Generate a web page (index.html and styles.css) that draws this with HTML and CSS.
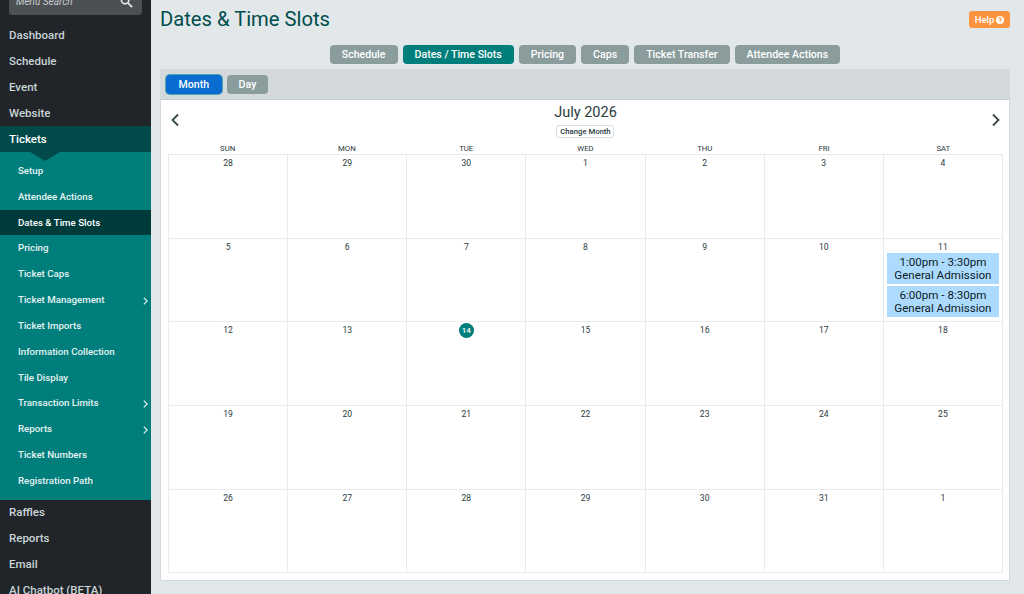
FILE: index.html
```html
<!DOCTYPE html>
<html lang="en">
<head>
    <meta charset="UTF-8">
    <meta name="viewport" content="width=device-width, initial-scale=1.0">
    <title>Dates &amp; Time Slots</title>
    <link rel="stylesheet" href="styles.css">
</head>
<body>
    <!-- Sidebar -->
    <nav class="sidebar">
        <div class="menu-search">
            <span>Menu Search</span>
            <svg class="search-icon" viewBox="0 0 14 14"><circle cx="5.5" cy="5.5" r="4"/><path d="M8.5 8.5L13 13"/></svg>
        </div>
        <a class="menu-item">Dashboard</a>
        <a class="menu-item">Schedule</a>
        <a class="menu-item">Event</a>
        <a class="menu-item">Website</a>
        <a class="menu-item active">Tickets</a>
        <div class="submenu">
            <a class="submenu-item">Setup</a>
            <a class="submenu-item">Attendee Actions</a>
            <a class="submenu-item active">Dates &amp; Time Slots</a>
            <a class="submenu-item">Pricing</a>
            <a class="submenu-item">Ticket Caps</a>
            <a class="submenu-item">Ticket Management <svg class="more" viewBox="0 0 5 8"><path d="M.8.6L4.2 4L.8 7.4"/></svg></a>
            <a class="submenu-item">Ticket Imports</a>
            <a class="submenu-item">Information Collection</a>
            <a class="submenu-item">Tile Display</a>
            <a class="submenu-item">Transaction Limits <svg class="more" viewBox="0 0 5 8"><path d="M.8.6L4.2 4L.8 7.4"/></svg></a>
            <a class="submenu-item">Reports <svg class="more" viewBox="0 0 5 8"><path d="M.8.6L4.2 4L.8 7.4"/></svg></a>
            <a class="submenu-item">Ticket Numbers</a>
            <a class="submenu-item">Registration Path</a>
        </div>
        <a class="menu-item">Raffles</a>
        <a class="menu-item">Reports</a>
        <a class="menu-item">Email</a>
        <a class="menu-item">AI Chatbot (BETA)</a>
    </nav>

    <main class="content">
        <header class="page-header">
            <h1>Dates &amp; Time Slots</h1>
            <button class="help-btn">Help
                <svg class="help-icon" viewBox="0 0 8 8"><circle cx="4" cy="4" r="4"/><path d="M2.7 3.1C2.8 1.3 5.4 1.5 5.3 3C5.2 3.8 4.1 3.8 4.1 4.9M4.1 5.6V6.5"/></svg>
            </button>
        </header>

        <div class="tabs">
            <button class="btn">Schedule</button>
            <button class="btn btn-active">Dates / Time Slots</button>
            <button class="btn">Pricing</button>
            <button class="btn">Caps</button>
            <button class="btn">Ticket Transfer</button>
            <button class="btn">Attendee Actions</button>
        </div>

        <div class="toolbar">
            <button class="btn btn-view">Month</button>
            <button class="btn">Day</button>
        </div>

        <!-- Calendar -->
        <section class="calendar">
            <div class="calendar-header">
                <svg class="arrow" viewBox="0 0 8 14"><path d="M7 1.5L1.5 7L7 12.5"/></svg>
                <div class="calendar-title">
                    <h2>July 2026</h2>
                    <button class="change-month">Change Month</button>
                </div>
                <svg class="arrow" viewBox="0 0 8 14"><path d="M1 1.5L6.5 7L1 12.5"/></svg>
            </div>
            <div class="weekdays">
                <div>SUN</div><div>MON</div><div>TUE</div><div>WED</div><div>THU</div><div>FRI</div><div>SAT</div>
            </div>
            <div class="days">
                <div class="day">28</div>
                <div class="day">29</div>
                <div class="day">30</div>
                <div class="day">1</div>
                <div class="day">2</div>
                <div class="day">3</div>
                <div class="day">4</div>

                <div class="day">5</div>
                <div class="day">6</div>
                <div class="day">7</div>
                <div class="day">8</div>
                <div class="day">9</div>
                <div class="day">10</div>
                <div class="day">11
                    <div class="slot">1:00pm - 3:30pm<br>General Admission</div>
                    <div class="slot">6:00pm - 8:30pm<br>General Admission</div>
                </div>

                <div class="day">12</div>
                <div class="day">13</div>
                <div class="day"><span class="today">14</span></div>
                <div class="day">15</div>
                <div class="day">16</div>
                <div class="day">17</div>
                <div class="day">18</div>

                <div class="day">19</div>
                <div class="day">20</div>
                <div class="day">21</div>
                <div class="day">22</div>
                <div class="day">23</div>
                <div class="day">24</div>
                <div class="day">25</div>

                <div class="day">26</div>
                <div class="day">27</div>
                <div class="day">28</div>
                <div class="day">29</div>
                <div class="day">30</div>
                <div class="day">31</div>
                <div class="day">1</div>
            </div>
        </section>
    </main>
</body>
</html>
```

FILE: styles.css
```css
* {
    margin: 0;
    padding: 0;
    box-sizing: border-box;
}

body {
    font-family: Roboto, "Liberation Sans", sans-serif;
    background: #e2e7ea;
    color: #2b3a3d;
    height: 100vh;
    display: flex;
    overflow: hidden;
}

button {
    font-family: inherit;
    border: none;
    cursor: pointer;
}

svg {
    fill: none;
    flex-shrink: 0;
}

/* Sidebar */
.sidebar {
    width: 151px;
    height: 594px;
    flex-shrink: 0;
    background: #212429;
    overflow: hidden;
}

.menu-search {
    height: 25px;
    margin: -10px 9px 8px;
    padding: 5px 9px 0 7px;
    background: #4c5054;
    border-radius: 3px;
    color: #c5cdd0;
    font-size: 10px;
    font-style: italic;
    line-height: 14px;
    display: flex;
    justify-content: space-between;
}

.search-icon {
    width: 13px;
    height: 13px;
    stroke: #e4e8e9;
    stroke-width: 1.8;
}

.menu-item {
    display: flex;
    align-items: center;
    height: 25.8px;
    padding: 0 0 1px 9px;
    color: #c9d5d7;
    font-size: 11.5px;
    font-weight: 500;
    white-space: nowrap;
}

.menu-item.active {
    position: relative;
    background: #004a4a;
    color: #fff;
}

/* pointer under the open section */
.menu-item.active::after {
    content: "";
    position: absolute;
    left: 30px;
    top: 100%;
    border: 15px solid transparent;
    border-top: 9px solid #004a4a;
    border-bottom: 0;
}

.submenu {
    background: #007e7b;
    padding: 6px 0;
}

.submenu-item {
    display: flex;
    align-items: center;
    justify-content: space-between;
    height: 25.83px;
    padding: 0 3px 1px 18px;
    color: #e6f3f3;
    font-size: 9.7px;
    font-weight: 500;
}

.submenu-item.active {
    background: #003b3c;
    color: #fff;
}

.more {
    width: 5px;
    height: 8px;
    margin-top: 3px;
    stroke: #e6f3f3;
    stroke-width: 1.2;
}

/* Content */
.content {
    flex: 1;
    padding: 0 14px 0 9px;
}

.page-header {
    display: flex;
    justify-content: space-between;
    height: 45px;
}

.page-header h1 {
    color: #004d4d;
    font-size: 20.2px;
    font-weight: 400;
    line-height: 38px;
}

.help-btn {
    display: flex;
    align-items: center;
    justify-content: center;
    gap: 2px;
    width: 41px;
    height: 17px;
    margin-top: 11px;
    border-radius: 3px;
    background: #ff9440;
    color: #fff;
    font-size: 9.5px;
    font-weight: 500;
}

.help-icon {
    width: 8px;
    height: 8px;
}

.help-icon circle {
    fill: #fff;
}

.help-icon path {
    stroke: #ff9440;
    stroke-width: 1.1;
}

.tabs {
    display: flex;
    justify-content: center;
    gap: 5px;
    height: 24px;
}

.btn {
    height: 19px;
    padding: 0 12px;
    border-radius: 4px;
    background: #8a9c9c;
    color: #fff;
    font-size: 10.6px;
    font-weight: 500;
}

.btn-active {
    background: #007e7b;
}

.btn-view {
    padding: 0 12.5px;
    background: #0a6bd0;
    box-shadow: 0 0 0 1px #4fa3b4;
}

.toolbar {
    display: flex;
    align-items: center;
    gap: 5px;
    height: 31px;
    padding-left: 6px;
    background: #d4d9dc;
    border-bottom: 1px solid #c7cdd0;
}

/* Calendar */
.calendar {
    height: 481px;
    padding: 4px 6px 0 7px;
    background: #fff;
    border: 1px solid #d3d9dc;
    border-top: 0;
}

.calendar-header {
    display: flex;
    justify-content: space-between;
    height: 40px;
    padding: 0 3px;
}

.arrow {
    width: 8px;
    height: 14px;
    margin-top: 9px;
    stroke: #36474a;
    stroke-width: 1.8;
}

.calendar-title {
    display: flex;
    flex-direction: column;
    align-items: center;
}

.calendar-title h2 {
    font-size: 14.5px;
    font-weight: 400;
    line-height: 17px;
}

.change-month {
    width: 58px;
    height: 13px;
    margin-top: 4px;
    border: 1px solid #dadddf;
    border-radius: 3px;
    background: #fff;
    color: #2b3a3d;
    font-size: 7.7px;
    font-weight: 500;
    line-height: 10px;
    white-space: nowrap;
}

.weekdays {
    display: grid;
    grid-template-columns: repeat(7, 1fr);
    height: 10px;
    font-size: 7.8px;
    line-height: 10px;
    text-align: center;
}

.days {
    display: grid;
    grid-template-columns: repeat(7, 1fr);
    grid-auto-rows: 83.7px;
    border-top: 1px solid #e9ebec;
    border-left: 1px solid #e9ebec;
}

.day {
    padding: 2px 3px 0;
    border-right: 1px solid #e9ebec;
    border-bottom: 1px solid #e9ebec;
    font-size: 8.6px;
    line-height: 12px;
    text-align: center;
}

.today {
    display: block;
    width: 15px;
    height: 15px;
    margin: -1px auto 0;
    border-radius: 50%;
    background: #007e7b;
    color: #fff;
    font-size: 8px;
    font-weight: 500;
    line-height: 15px;
}

.slot {
    height: 31px;
    margin-bottom: 2px;
    padding-top: 3px;
    background: #addbff;
    color: #0d1c26;
    font-size: 11.6px;
    line-height: 13px;
    white-space: nowrap;
}
```
